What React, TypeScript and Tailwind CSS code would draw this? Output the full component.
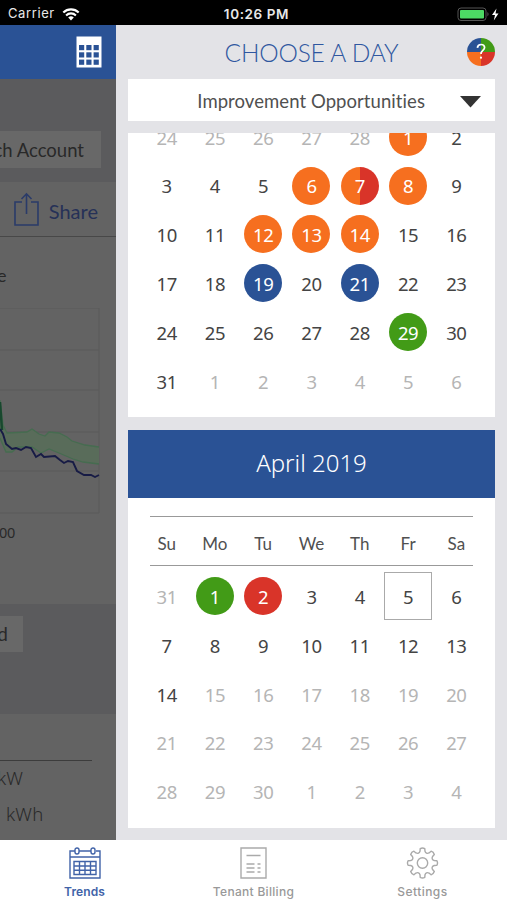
import React from "react";

type Kind = "orange" | "blue" | "green" | "red" | "split" | "today" | "dim";

const kinds: Record<Kind, string> = {
  orange: "h-[38px] w-[38px] rounded-full bg-[#f66f1f] text-white",
  blue: "h-[38px] w-[38px] rounded-full bg-[#2a5295] text-white",
  green: "h-[38px] w-[38px] rounded-full bg-[#429b17] text-white",
  red: "h-[38px] w-[38px] rounded-full bg-[#d93429] text-white",
  split: "h-[38px] w-[38px] rounded-full bg-linear-to-r from-[#f66f1f] from-50% to-[#d93429] to-50% text-white",
  today: "h-12 w-12 outline-[1.5px] -outline-offset-1 outline-[#aaa] text-[#444]",
  dim: "h-[38px] w-[38px] text-[#b5b5b5]",
};

const march = [24, 25, 26, 27, 28, ...Array.from({ length: 31 }, (_, i) => i + 1), 1, 2, 3, 4, 5, 6];
const marchKinds: Record<number, Kind> = {
  0: "dim", 1: "dim", 2: "dim", 3: "dim", 4: "dim", 5: "orange",
  10: "orange", 11: "split", 12: "orange", 16: "orange", 17: "orange", 18: "orange",
  23: "blue", 25: "blue", 33: "green",
  36: "dim", 37: "dim", 38: "dim", 39: "dim", 40: "dim", 41: "dim",
};

const april = [31, ...Array.from({ length: 30 }, (_, i) => i + 1), 1, 2, 3, 4];
const aprilKinds: Record<number, Kind> = { 0: "dim", 1: "green", 2: "red", 5: "today" };
for (let i = 15; i < 35; i++) aprilKinds[i] = "dim";

function Days({ days, marks }: { days: number[]; marks: Record<number, Kind> }) {
  return (
    <div className="mx-auto grid w-[338px] auto-rows-[48.8px] grid-cols-7 font-['Noto_Sans',sans-serif] text-[18.5px] tracking-[-0.4px]">
      {days.map((d, i) => (
        <div key={i} className="flex items-center justify-center">
          <div className={`flex shrink-0 items-center justify-center ${marks[i] ? kinds[marks[i]] : "text-[#444]"}`}>
            <span className="pt-px">{d}</span>
          </div>
        </div>
      ))}
    </div>
  );
}

function StatusBar() {
  return (
    <div className="flex h-[25px] shrink-0 items-center bg-black px-2 pt-[3px] font-[Inter,sans-serif] text-[13px] text-[#e8e8e8]">
      <div className="flex flex-1 items-center gap-[7px]">
        <span className="tracking-[0.6px]">Carrier</span>
        <svg width="18" height="13" viewBox="0 0 18 13" fill="none" stroke="#fff" strokeWidth="2.1">
          <path d="M1.3 4.5a11 11 0 0 1 15.4 0M4.1 7.4a7 7 0 0 1 9.8 0" />
          <path d="M6.2 9.5a4 4 0 0 1 5.6 0L9 12.4z" fill="#fff" stroke="none" />
        </svg>
      </div>
      <span className="ml-1.5 text-[13.5px] font-semibold tracking-[0.6px]">10:26 PM</span>
      <div className="flex flex-1 items-center justify-end">
        <svg width="44" height="15" viewBox="0 0 44 15">
          <rect x="3" y="1" width="28" height="12.5" rx="3" fill="none" stroke="#555" />
          <rect x="5" y="3" width="24" height="8.5" rx="1" fill="#4cd964" />
          <path d="M32.5 5q2 2.2 0 4.4z" fill="#666" />
          <path d="M41.5 1.5 37 8h3l-1.2 5.5L43.5 6.6h-3z" fill="#fff" />
        </svg>
      </div>
    </div>
  );
}

function DimmedPage() {
  return (
    <div className="flex w-[116px] shrink-0 flex-col overflow-hidden bg-[#636363] text-[#292929]">
      <div className="flex h-[54px] shrink-0 items-center justify-end bg-[#2a5295] pr-[14px]">
        <svg width="26" height="32" viewBox="0 0 26 32">
          <path d="M.5.5h25v31H.5z" fill="#fff" />
          {[0, 1, 2].map((r) =>
            [0, 1, 2].map((c) => (
              <rect key={`${r}${c}`} x={3 + c * 7.3} y={9 + r * 7.3} width="5.2" height="5.2" fill="#2a5295" />
            ))
          )}
        </svg>
      </div>
      <div className="h-[103px] shrink-0 bg-[#5b5b5d] pt-[52px] font-[Lato,sans-serif]">
        <div className="flex h-[37px] w-[101px] items-center justify-end bg-[#686868] pt-[3px] pr-[17px] text-[18.5px] whitespace-nowrap">ch Account</div>
      </div>
      <div className="flex h-[55px] shrink-0 items-center justify-end gap-[9px] border-b border-[#484848] pr-[18px] font-[Lato,sans-serif] text-[20px] text-[#263157]">
        <svg width="26" height="34" viewBox="0 0 26 34" fill="none" stroke="#2a3b69" strokeWidth="1.6">
          <path d="M8 10H1v23h23V10h-7M12.5 22V2M7.5 7l5-5.2 5 5.2" />
        </svg>
        <span className="pt-[3px]">Share</span>
      </div>
      <div className="h-[347px] shrink-0 font-[Lato,sans-serif]">
        <div className="h-[71px] pt-[26px] text-[18px] leading-[25px]"><span className="-ml-[3px]">e</span></div>
        <svg className="block" width="116" height="208" viewBox="0 308 116 208" fill="none">
          <path d="M0 308H99V513H0M0 350H99M0 390H99M0 432H99M0 471H99" stroke="#5b5b5b" />
          <path d="M0 400 3 425 7 433 27 432 32 429 39 434 45 436 49 432 59 433 67 437 72 441 85 445 99 447V464L83 462 73 459 59 453 49 449 41 453 32 447 18 447 12 452 6 452 0 438Z" fill="#596c5a" />
          <path d="M0 400 3 425 7 433 27 432 32 429 39 434 45 436 49 432 59 433 67 437 72 441 85 445 99 447M0 438 6 452 12 452 18 447 32 447 41 453 49 449 59 453 73 459 83 462 99 464" stroke="#466c50" strokeWidth="1.3" />
          <path d="M0 402 2 430" stroke="#18482e" strokeWidth="2.5" />
          <path d="M0 429 3 434 6 444 12 449 16 448 21 450 26 447 31 448 36 457 41 454 44 457 55 456 60 460 64 463 68 461 73 462 77 471 84 475 91 475 95 477 99 475" stroke="#171b45" strokeWidth="1.9" />
        </svg>
        <div className="-ml-px pt-[2px] font-['Noto_Sans',sans-serif] text-[14.5px] leading-[28px] tracking-[-.3px]">00</div>
      </div>
      <div className="mt-[20px] h-[110px] shrink-0 bg-[#5b5b5d] pt-3 font-[Lato,sans-serif]">
        <div className="flex h-9 w-[23px] items-center justify-end bg-[#686868] pr-[15px] text-[19px]">d</div>
      </div>
      <div className="flex-1 pt-[46px] font-['Noto_Sans',sans-serif] text-[18.5px] font-light">
        <div className="w-[92px] border-b border-[#3c3c3c]" />
        <div className="-ml-[3px] h-9 leading-[34px]">kW</div>
        <div className="ml-[6px] h-9 leading-[34px] tracking-[.2px]">kWh</div>
      </div>
    </div>
  );
}

function Drawer() {
  return (
    <div className="flex flex-1 flex-col bg-[#e3e3e7] pr-3 pl-3">
      <div className="relative flex h-[54px] shrink-0 items-center justify-center font-[Lato,sans-serif] text-[24.5px] font-light text-[#2f57a0]">
        <span className="pt-[3px] tracking-[-0.2px]">CHOOSE A DAY</span>
        <svg className="absolute top-[13px] right-0" width="28" height="28" viewBox="0 0 28 28">
          <path d="M14 14V0A14 14 0 0 0 0 14z" fill="#2a5295" />
          <path d="M14 14h14A14 14 0 0 0 14 0z" fill="#429b17" />
          <path d="M14 14H0a14 14 0 0 0 14 14z" fill="#f66f1f" />
          <path d="M14 14v14a14 14 0 0 0 14-14z" fill="#d93429" />
          <path d="M10.4 9.8q.3-3.3 3.7-3.3t3.5 3c0 3-3.8 3-3.6 6.5" fill="none" stroke="#fff" strokeWidth="1.7" />
          <circle cx="14" cy="19.7" r="1.1" fill="#fff" />
        </svg>
      </div>
      <div className="flex h-[42px] shrink-0 items-center justify-end gap-[35px] bg-white pr-[14px] font-[Lato,sans-serif] text-[18.5px] text-[#505050]">
        <span className="pt-[3px] tracking-[0.07px]">Improvement Opportunities</span>
        <svg className="mt-1" width="21" height="12" viewBox="0 0 21 12"><path d="M0 0h21L10.5 11.5z" fill="#333" /></svg>
      </div>
      <div className="mt-3 h-[284px] shrink-0 overflow-hidden bg-white">
        <div className="-mt-[20.5px]"><Days days={march} marks={marchKinds} /></div>
      </div>
      <div className="mt-[13px] h-[398px] shrink-0 bg-white">
        <div className="flex h-[68px] items-center justify-center bg-[#2a5295] pb-[3px] font-['Noto_Sans',sans-serif] text-[24px] font-light text-white">April 2019</div>
        <div className="mx-[22px] mt-[18px] h-[50px] border-y-[1.5px] border-[#999]">
          <div className="-mx-[7.5px] grid h-full grid-cols-7 items-center pt-[5px] text-center font-[Lato,sans-serif] text-[17px] text-[#505050]">
            {["Su", "Mo", "Tu", "We", "Th", "Fr", "Sa"].map((d) => <span key={d}>{d}</span>)}
          </div>
        </div>
        <div className="mt-[6px]"><Days days={april} marks={aprilKinds} /></div>
      </div>
    </div>
  );
}

const polar = (deg: number, r: number) => {
  const a = (deg * Math.PI) / 180;
  return `${(16.5 + r * Math.sin(a)).toFixed(2)} ${(16 - r * Math.cos(a)).toFixed(2)}`;
};

// Eight narrow teeth joined by rounded valleys.
const gearPath =
  Array.from({ length: 8 }, (_, k) => {
    const a = k * 45;
    return `${k ? "L" : "M"}${polar(a - 9, 14.6)}Q${polar(a, 15.6)} ${polar(a + 9, 14.6)}L${polar(a + 12, 12)}Q${polar(a + 22.5, 9.4)} ${polar(a + 33, 12)}`;
  }).join("") + "Z";

function TabBar() {
  return (
    <div className="grid h-[60px] shrink-0 grid-cols-3 bg-white font-[Inter,sans-serif] text-[12px] font-medium text-[#999]">
      <div className="flex flex-col items-center pt-[7px] text-[#4163a8]">
        <svg width="32" height="33" viewBox="0 0 32 33" fill="none" stroke="currentColor" strokeWidth="1.4">
          <path d="M6 4H1v27h30V4h-4M10 4h12M1 10h30" />
          <rect x="6" y="1" width="4" height="6" rx="2" /><rect x="22" y="1" width="4" height="6" rx="2" />
          <path d="M5 14.5h22v13H5zM5 19h22M5 23.3h22M10.5 14.5v13M16 14.5v13M21.5 14.5v13" />
        </svg>
        <span className="mt-[3px] leading-[18px] font-semibold tracking-[.1px]">Trends</span>
      </div>
      <div className="flex flex-col items-center pt-[7px]">
        <svg width="27" height="33" viewBox="0 0 27 33" fill="none" stroke="#aaa" strokeWidth="1.4">
          <path d="M1 1h25v30H1zM6.5 8.5h14M6.5 17h8M6.5 21h8M6.5 25h8M17.5 17h3M17.5 21h3M17.5 25h3" />
        </svg>
        <span className="mt-[3px] leading-[18px] tracking-[.3px]">Tenant Billing</span>
      </div>
      <div className="flex flex-col items-center pt-[7px]">
        <svg width="33" height="33" viewBox="0 0 33 33" fill="none" stroke="#aaa" strokeWidth="1.4" strokeLinejoin="round">
          <circle cx="16.5" cy="16" r="5.2" />
          <path d={gearPath} />
        </svg>
        <span className="mt-[3px] leading-[18px] tracking-[.45px]">Settings</span>
      </div>
    </div>
  );
}

export default function App() {
  return (
    <div className="flex h-[900px] w-[507px] flex-col overflow-hidden">
      <StatusBar />
      <div className="flex h-[815px] shrink-0">
        <DimmedPage />
        <Drawer />
      </div>
      <TabBar />
    </div>
  );
}
